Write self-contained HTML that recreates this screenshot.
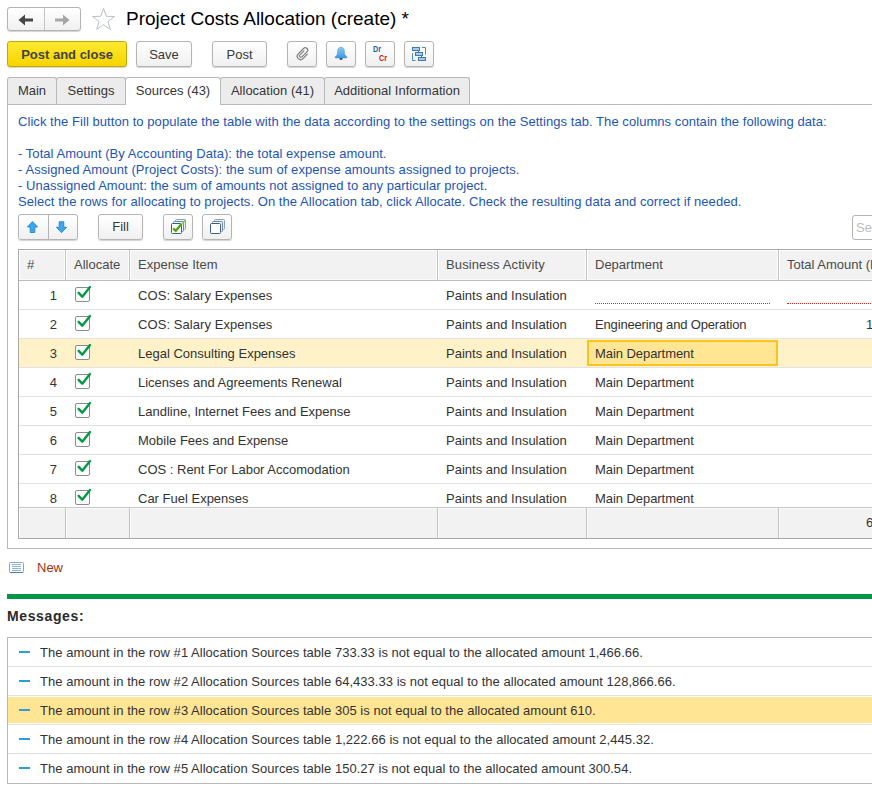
<!DOCTYPE html>
<html><head><meta charset="utf-8">
<style>
html,body{margin:0;padding:0;background:#fff;}
body{width:872px;height:792px;overflow:hidden;position:relative;font-family:"Liberation Sans",Arial,sans-serif;font-size:13px;color:#333;}
.abs{position:absolute;}
.btn{position:absolute;box-sizing:border-box;border:1px solid #b4b4b4;border-radius:3px;background:linear-gradient(#ffffff,#f0f0f0);box-shadow:0 1px 1px rgba(0,0,0,.18);height:26px;line-height:24px;text-align:center;color:#383838;font-size:13px;}
.tab{position:absolute;box-sizing:border-box;top:77px;height:27px;border:1px solid #b8b8b8;border-bottom:none;background:#ececec;border-radius:3px 3px 0 0;line-height:26px;text-align:center;font-size:13px;color:#363636;}
.tab.act{height:28px;background:#fff;z-index:2;}
.info{position:absolute;left:18px;color:#1d55b4;font-size:13px;line-height:16px;white-space:nowrap;letter-spacing:0.05px}
.cell{position:absolute;white-space:nowrap;font-size:13px;color:#333;line-height:29px;}
.hl{position:absolute;background:#e2e2e2;height:1px;}
.vl{position:absolute;background:#c4c4c4;width:1px;}
.msg{position:absolute;left:40px;white-space:nowrap;letter-spacing:0.03px;font-size:13px;line-height:29px;color:#333;}
.dash{position:absolute;left:19px;width:11px;height:2px;background:#2aa0d8;}
</style></head><body>

<!-- nav buttons -->
<div class="btn" style="left:7px;top:7px;width:74px;height:24px;"></div>
<div class="abs" style="left:44px;top:8px;width:1px;height:22px;background:#c4c4c4"></div>
<svg class="abs" style="left:18px;top:13.5px" width="16" height="12" viewBox="0 0 16 12"><path d="M0.5 6 L7 0.5 L7 4.5 L15 4.5 L15 7.5 L7 7.5 L7 11.5 Z" fill="#454545"/></svg>
<svg class="abs" style="left:54px;top:13.5px" width="16" height="12" viewBox="0 0 16 12"><path d="M15.5 6 L9 0.5 L9 4.5 L1 4.5 L1 7.5 L9 7.5 L9 11.5 Z" fill="#a6a6a6"/></svg>
<!-- star -->
<svg class="abs" style="left:91px;top:7px" width="25" height="24" viewBox="0 0 25 24"><path d="M12.5 1.5 L15.3 9.3 L23.5 9.5 L17 14.5 L19.3 22.4 L12.5 17.7 L5.7 22.4 L8 14.5 L1.5 9.5 L9.7 9.3 Z" fill="#fff" stroke="#b9c0c8" stroke-width="1"/></svg>
<div class="abs" style="left:126px;top:8px;font-size:19px;line-height:22px;color:#000;white-space:nowrap">Project Costs Allocation (create) *</div>

<!-- command bar -->
<div class="btn" style="left:7px;top:41px;width:120px;background:linear-gradient(#ffe930,#f5d400);border-color:#c2a800;font-weight:bold;color:#444;line-height:26px">Post and close</div>
<div class="btn" style="left:136px;top:41px;width:56px;line-height:26px">Save</div>
<div class="btn" style="left:212px;top:41px;width:55px;line-height:26px">Post</div>
<div class="btn" style="left:287px;top:41px;width:30px;"></div>
<div class="btn" style="left:326px;top:41px;width:30px;"></div>
<div class="btn" style="left:365px;top:41px;width:30px;"></div>
<div class="btn" style="left:404px;top:41px;width:30px;"></div>


<!-- icons -->
<svg class="abs" style="left:292.5px;top:44px" width="20" height="20" viewBox="0 0 20 20"><g transform="translate(10 9.8) rotate(45) scale(0.8) translate(-10 -10)" fill="none" stroke="#7d7d7d" stroke-width="1.5" stroke-linecap="round"><path d="M8.2 6.5 v7.2 a1.8 1.8 0 0 0 3.6 0 v-8.9 a3 3 0 0 0 -6 0 v9.4 a4.2 4.2 0 0 0 8.4 0 v-7.7"/></g></svg>
<svg class="abs" style="left:333px;top:45px" width="16" height="16" viewBox="0 0 16 16"><defs><linearGradient id="bg" x1="0" y1="0" x2="0" y2="1"><stop offset="0" stop-color="#8ecbf4"/><stop offset="1" stop-color="#3a98e2"/></linearGradient></defs><circle cx="8" cy="13.6" r="1.5" fill="#3a4a5a"/><path d="M8 2.4 C5.6 2.4 4.7 4.2 4.7 6.3 C4.7 9.2 4 10.6 2.2 11.8 L2.2 12.9 L13.8 12.9 L13.8 11.8 C12 10.6 11.3 9.2 11.3 6.3 C11.3 4.2 10.4 2.4 8 2.4 Z" fill="url(#bg)" stroke="#3f93da" stroke-width="0.6"/></svg>
<div class="abs" style="left:373px;top:43.5px;font-size:8.5px;line-height:10px;font-weight:bold;color:#2463a3;transform:scaleX(0.84);transform-origin:0 0">Dr</div>
<div class="abs" style="left:379px;top:52.5px;font-size:8.5px;line-height:10px;font-weight:bold;color:#cc1414;transform:scaleX(0.84);transform-origin:0 0">Cr</div>
<svg class="abs" style="left:411px;top:46px" width="16" height="16" viewBox="0 0 16 16"><g fill="none" stroke="#4f8cc6" stroke-width="1"><path d="M1.5 7 V14.5 H4.5"/><path d="M11 1.5 H14.5 V8.5"/><path d="M7.5 4.5 V6.5 M10.5 9.5 V11.5" stroke="#3f78b0"/></g><g fill="#a9c9ea" stroke="#3f78b0" stroke-width="1"><rect x="1.5" y="1.5" width="7" height="3"/><rect x="4.5" y="6.5" width="7" height="3"/><rect x="7.5" y="11.5" width="7" height="3"/></g></svg>

<!-- tabs -->
<div class="abs" style="left:7px;top:104px;width:865px;height:1px;background:#b8b8b8"></div>
<div class="abs" style="left:7px;top:104px;width:1px;height:445px;background:#b8b8b8"></div>
<div class="abs" style="left:7px;top:548px;width:865px;height:1px;background:#b8b8b8"></div>
<div class="tab" style="left:7px;width:50px;">Main</div>
<div class="tab" style="left:56px;width:70px;">Settings</div>
<div class="tab act" style="left:125px;width:96px;">Sources (43)</div>
<div class="tab" style="left:220px;width:105px;">Allocation (41)</div>
<div class="tab" style="left:324px;width:146px;">Additional Information</div>

<!-- info text -->
<div class="info" style="top:114px;letter-spacing:0.057px">Click the Fill button to populate the table with the data according to the settings on the Settings tab. The columns contain the following data:</div>
<div class="info" style="top:146px">- Total Amount (By Accounting Data): the total expense amount.</div>
<div class="info" style="top:162px;letter-spacing:0.078px">- Assigned Amount (Project Costs): the sum of expense amounts assigned to projects.</div>
<div class="info" style="top:178px">- Unassigned Amount: the sum of amounts not assigned to any particular project.</div>
<div class="info" style="top:194px;letter-spacing:0.062px">Select the rows for allocating to projects. On the Allocation tab, click Allocate. Check the resulting data and correct if needed.</div>

<!-- table toolbar -->
<div class="btn" style="left:18px;top:214px;width:60px;"></div>
<div class="abs" style="left:48px;top:215px;width:1px;height:24px;background:#b4b4b4"></div>
<div class="btn" style="left:98px;top:214px;width:45px;">Fill</div>
<div class="btn" style="left:163px;top:214px;width:30px;"></div>
<div class="btn" style="left:202px;top:214px;width:30px;"></div>
<div class="abs" style="left:852px;top:215px;width:40px;height:23px;border:1px solid #b4b4b4;border-radius:3px;font-size:13px;line-height:23px;color:#bcbcbc;padding-left:3px">Search</div>

<!-- toolbar icons -->
<svg class="abs" style="left:26px;top:220px" width="13" height="14" viewBox="0 0 13 14"><path d="M6.5 1.6 L11.6 7 L8.8 7 L8.8 12.5 L4.2 12.5 L4.2 7 L1.4 7 Z" fill="#3ea6ec" stroke="#2484cf" stroke-width="0.9" stroke-linejoin="round"/></svg>
<svg class="abs" style="left:55px;top:220px" width="13" height="14" viewBox="0 0 13 14"><path d="M6.5 12.7 L11.6 7.3 L8.8 7.3 L8.8 1.8 L4.2 1.8 L4.2 7.3 L1.4 7.3 Z" fill="#3ea6ec" stroke="#2484cf" stroke-width="0.9" stroke-linejoin="round"/></svg>
<svg class="abs" style="left:170px;top:218px" width="17" height="17" viewBox="0 0 17 17"><g fill="#fff" stroke-width="1"><rect x="5.5" y="1.5" width="10" height="10" rx="1" stroke="#8da2b8" fill="#e8eef4"/><rect x="3.5" y="3.5" width="10" height="10" rx="1" stroke="#6f89a4" fill="#f2f5f8"/><rect x="1.5" y="5.5" width="10" height="10" rx="1" stroke="#3e5f80"/></g><path d="M3.2 10.3 L5.8 12.8 L11.5 6" fill="none" stroke="#4aaa10" stroke-width="2.4"/><path d="M12.5 5.5 L14 3.5 M14.5 3.5 L15.5 2" stroke="#6fbf3a" stroke-width="1.6" fill="none"/></svg>
<svg class="abs" style="left:209px;top:218px" width="17" height="17" viewBox="0 0 17 17"><g fill="#fff" stroke-width="1"><rect x="5.5" y="1.5" width="10" height="10" rx="1" stroke="#8da2b8" fill="#e8eef4"/><rect x="3.5" y="3.5" width="10" height="10" rx="1" stroke="#6f89a4" fill="#f2f5f8"/><rect x="1.5" y="5.5" width="10" height="10" rx="1" stroke="#3e5f80"/></g></svg>

<!-- table -->
<div class="abs" style="left:18px;top:249px;width:860px;height:290px;border:1px solid #a8a8a8;box-sizing:border-box;"></div>
<div class="abs" style="left:19px;top:250px;width:853px;height:30px;background:#f2f2f2;"></div>
<div class="abs" style="left:19px;top:250px;width:853px;height:1px;background:#fff"></div>
<div class="abs" style="left:19px;top:279px;width:853px;height:1px;background:#fafafa"></div>
<div class="abs" style="left:19px;top:250px;width:1px;height:30px;background:#fff"></div>
<div class="abs" style="left:66px;top:250px;width:1px;height:30px;background:#fff"></div>
<div class="abs" style="left:130px;top:250px;width:1px;height:30px;background:#fff"></div>
<div class="abs" style="left:438px;top:250px;width:1px;height:30px;background:#fff"></div>
<div class="abs" style="left:587px;top:250px;width:1px;height:30px;background:#fff"></div>
<div class="abs" style="left:779px;top:250px;width:1px;height:30px;background:#fff"></div>
<div class="abs" style="left:64px;top:250px;width:1px;height:30px;background:#fbfbfb"></div>
<div class="abs" style="left:128px;top:250px;width:1px;height:30px;background:#fbfbfb"></div>
<div class="abs" style="left:436px;top:250px;width:1px;height:30px;background:#fbfbfb"></div>
<div class="abs" style="left:585px;top:250px;width:1px;height:30px;background:#fbfbfb"></div>
<div class="abs" style="left:777px;top:250px;width:1px;height:30px;background:#fbfbfb"></div>
<div class="hl" style="left:19px;top:280px;width:853px;background:#bcbcbc"></div>
<div class="abs" style="left:19px;top:339px;width:853px;height:28px;background:#fff2c8;"></div>
<div class="cell" style="left:19px;width:38px;text-align:right;top:281px;height:28px;line-height:30px">1</div>
<svg class="abs" style="left:74px;top:285px" width="18" height="19" viewBox="0 0 18 19"><rect x="1.5" y="2.5" width="14" height="14" rx="1.5" fill="#fff" stroke="#8c8c8c"/><path d="M4.6 7.8 L8.3 11.7 L16 2.1" fill="none" stroke="#009a44" stroke-width="2.4" stroke-linecap="round" stroke-linejoin="round"/></svg>
<div class="cell" style="left:138px;top:281px;line-height:30px;letter-spacing:0.07px">COS: Salary Expenses</div>
<div class="cell" style="left:446px;top:281px;line-height:30px">Paints and Insulation</div>
<div class="hl" style="left:19px;top:309px;width:853px"></div>
<div class="cell" style="left:19px;width:38px;text-align:right;top:310px;height:28px;line-height:30px">2</div>
<svg class="abs" style="left:74px;top:314px" width="18" height="19" viewBox="0 0 18 19"><rect x="1.5" y="2.5" width="14" height="14" rx="1.5" fill="#fff" stroke="#8c8c8c"/><path d="M4.6 7.8 L8.3 11.7 L16 2.1" fill="none" stroke="#009a44" stroke-width="2.4" stroke-linecap="round" stroke-linejoin="round"/></svg>
<div class="cell" style="left:138px;top:310px;line-height:30px;letter-spacing:0.07px">COS: Salary Expenses</div>
<div class="cell" style="left:446px;top:310px;line-height:30px">Paints and Insulation</div>
<div class="cell" style="left:595px;top:310px;line-height:30px;letter-spacing:-0.16px">Engineering and Operation</div>
<div class="hl" style="left:19px;top:338px;width:853px"></div>
<div class="cell" style="left:19px;width:38px;text-align:right;top:339px;height:28px;line-height:30px">3</div>
<svg class="abs" style="left:74px;top:343px" width="18" height="19" viewBox="0 0 18 19"><rect x="1.5" y="2.5" width="14" height="14" rx="1.5" fill="#fff" stroke="#8c8c8c"/><path d="M4.6 7.8 L8.3 11.7 L16 2.1" fill="none" stroke="#009a44" stroke-width="2.4" stroke-linecap="round" stroke-linejoin="round"/></svg>
<div class="cell" style="left:138px;top:339px;line-height:30px">Legal Consulting Expenses</div>
<div class="cell" style="left:446px;top:339px;line-height:30px">Paints and Insulation</div>
<div class="hl" style="left:19px;top:367px;width:853px"></div>
<div class="cell" style="left:19px;width:38px;text-align:right;top:368px;height:28px;line-height:30px">4</div>
<svg class="abs" style="left:74px;top:372px" width="18" height="19" viewBox="0 0 18 19"><rect x="1.5" y="2.5" width="14" height="14" rx="1.5" fill="#fff" stroke="#8c8c8c"/><path d="M4.6 7.8 L8.3 11.7 L16 2.1" fill="none" stroke="#009a44" stroke-width="2.4" stroke-linecap="round" stroke-linejoin="round"/></svg>
<div class="cell" style="left:138px;top:368px;line-height:30px">Licenses and Agreements Renewal</div>
<div class="cell" style="left:446px;top:368px;line-height:30px">Paints and Insulation</div>
<div class="cell" style="left:595px;top:368px;line-height:30px;letter-spacing:-0.06px">Main Department</div>
<div class="hl" style="left:19px;top:396px;width:853px"></div>
<div class="cell" style="left:19px;width:38px;text-align:right;top:397px;height:28px;line-height:30px">5</div>
<svg class="abs" style="left:74px;top:401px" width="18" height="19" viewBox="0 0 18 19"><rect x="1.5" y="2.5" width="14" height="14" rx="1.5" fill="#fff" stroke="#8c8c8c"/><path d="M4.6 7.8 L8.3 11.7 L16 2.1" fill="none" stroke="#009a44" stroke-width="2.4" stroke-linecap="round" stroke-linejoin="round"/></svg>
<div class="cell" style="left:138px;top:397px;line-height:30px">Landline, Internet Fees and Expense</div>
<div class="cell" style="left:446px;top:397px;line-height:30px">Paints and Insulation</div>
<div class="cell" style="left:595px;top:397px;line-height:30px;letter-spacing:-0.06px">Main Department</div>
<div class="hl" style="left:19px;top:425px;width:853px"></div>
<div class="cell" style="left:19px;width:38px;text-align:right;top:426px;height:28px;line-height:30px">6</div>
<svg class="abs" style="left:74px;top:430px" width="18" height="19" viewBox="0 0 18 19"><rect x="1.5" y="2.5" width="14" height="14" rx="1.5" fill="#fff" stroke="#8c8c8c"/><path d="M4.6 7.8 L8.3 11.7 L16 2.1" fill="none" stroke="#009a44" stroke-width="2.4" stroke-linecap="round" stroke-linejoin="round"/></svg>
<div class="cell" style="left:138px;top:426px;line-height:30px">Mobile Fees and Expense</div>
<div class="cell" style="left:446px;top:426px;line-height:30px">Paints and Insulation</div>
<div class="cell" style="left:595px;top:426px;line-height:30px;letter-spacing:-0.06px">Main Department</div>
<div class="hl" style="left:19px;top:454px;width:853px"></div>
<div class="cell" style="left:19px;width:38px;text-align:right;top:455px;height:28px;line-height:30px">7</div>
<svg class="abs" style="left:74px;top:459px" width="18" height="19" viewBox="0 0 18 19"><rect x="1.5" y="2.5" width="14" height="14" rx="1.5" fill="#fff" stroke="#8c8c8c"/><path d="M4.6 7.8 L8.3 11.7 L16 2.1" fill="none" stroke="#009a44" stroke-width="2.4" stroke-linecap="round" stroke-linejoin="round"/></svg>
<div class="cell" style="left:138px;top:455px;line-height:30px">COS : Rent For Labor Accomodation</div>
<div class="cell" style="left:446px;top:455px;line-height:30px">Paints and Insulation</div>
<div class="cell" style="left:595px;top:455px;line-height:30px;letter-spacing:-0.06px">Main Department</div>
<div class="hl" style="left:19px;top:483px;width:853px"></div>
<div class="cell" style="left:19px;width:38px;text-align:right;top:484px;height:28px;line-height:30px">8</div>
<svg class="abs" style="left:74px;top:488px" width="18" height="19" viewBox="0 0 18 19"><rect x="1.5" y="2.5" width="14" height="14" rx="1.5" fill="#fff" stroke="#8c8c8c"/><path d="M4.6 7.8 L8.3 11.7 L16 2.1" fill="none" stroke="#009a44" stroke-width="2.4" stroke-linecap="round" stroke-linejoin="round"/></svg>
<div class="cell" style="left:138px;top:484px;line-height:30px">Car Fuel Expenses</div>
<div class="cell" style="left:446px;top:484px;line-height:30px">Paints and Insulation</div>
<div class="cell" style="left:595px;top:484px;line-height:30px;letter-spacing:-0.06px">Main Department</div>
<div class="abs" style="left:587px;top:340px;width:191px;height:26px;box-sizing:border-box;border:2px solid #f7c51e;background:#ffe594;"></div>
<div class="cell" style="left:595px;top:339px;line-height:30px;letter-spacing:-0.06px">Main Department</div>
<div class="abs" style="left:595px;top:303px;width:175px;height:0;border-top:1px dotted #e02020"></div>
<div class="abs" style="left:787px;top:303px;width:90px;height:0;border-top:1px dotted #e02020"></div>
<div class="cell" style="left:866px;top:310px;line-height:30px">1</div>
<div class="abs" style="left:19px;top:507px;width:853px;height:31px;background:#f2f2f2;border-top:1px solid #c8c8c8;box-sizing:border-box"></div>
<div class="abs" style="left:19px;top:508px;width:853px;height:1px;background:#fafafa"></div>
<div class="abs" style="left:19px;top:508px;width:1px;height:30px;background:#fbfbfb"></div>
<div class="abs" style="left:66px;top:508px;width:1px;height:30px;background:#fbfbfb"></div>
<div class="abs" style="left:130px;top:508px;width:1px;height:30px;background:#fbfbfb"></div>
<div class="abs" style="left:438px;top:508px;width:1px;height:30px;background:#fbfbfb"></div>
<div class="abs" style="left:587px;top:508px;width:1px;height:30px;background:#fbfbfb"></div>
<div class="abs" style="left:779px;top:508px;width:1px;height:30px;background:#fbfbfb"></div>
<div class="cell" style="left:866px;top:508px;line-height:29px">6</div>
<div class="cell" style="left:27px;top:250px;line-height:30px;color:#4a4a4a">#</div>
<div class="cell" style="left:74px;top:250px;line-height:30px;color:#4a4a4a">Allocate</div>
<div class="cell" style="left:138px;top:250px;line-height:30px;color:#4a4a4a">Expense Item</div>
<div class="cell" style="left:446px;top:250px;line-height:30px;color:#4a4a4a;letter-spacing:0.12px">Business Activity</div>
<div class="cell" style="left:595px;top:250px;line-height:30px;color:#4a4a4a">Department</div>
<div class="cell" style="left:787px;top:250px;line-height:30px;color:#4a4a4a">Total Amount (By</div>
<div class="vl" style="left:65px;top:250px;height:30px"></div>
<div class="vl" style="left:65px;top:508px;height:30px"></div>
<div class="vl" style="left:129px;top:250px;height:30px"></div>
<div class="vl" style="left:129px;top:508px;height:30px"></div>
<div class="vl" style="left:437px;top:250px;height:30px"></div>
<div class="vl" style="left:437px;top:508px;height:30px"></div>
<div class="vl" style="left:586px;top:250px;height:30px"></div>
<div class="vl" style="left:586px;top:508px;height:30px"></div>
<div class="vl" style="left:778px;top:250px;height:30px"></div>
<div class="vl" style="left:778px;top:508px;height:30px"></div>
<svg class="abs" style="left:9px;top:562px" width="15" height="11" viewBox="0 0 15 11"><rect x="0.5" y="0.5" width="14" height="10" rx="1" fill="#fff" stroke="#8fa3b8"/><path d="M1 10.5h13" stroke="#5a7a98"/><path d="M3 2.5h9M3 4.5h9M3 6.5h9M3 8.5h9" stroke="#8ab4dc" stroke-width="1"/></svg>
<div class="abs" style="left:37px;top:560px;line-height:16px;font-size:13px;color:#9a3412">New</div>
<div class="abs" style="left:7px;top:594px;width:865px;height:5px;background:#009646"></div>
<div class="abs" style="left:7px;top:608px;line-height:16px;font-size:14px;font-weight:bold;color:#2a2a2a;letter-spacing:0.62px">Messages:</div>
<div class="abs" style="left:7px;top:637px;width:870px;height:147px;border:1px solid #b8b8b8;box-sizing:border-box;"></div>
<div class="dash" style="top:651px"></div>
<div class="msg" style="top:638px;line-height:30px">The amount in the row #1 Allocation Sources table 733.33 is not equal to the allocated amount 1,466.66.</div>
<div class="hl" style="left:8px;top:666px;width:864px"></div>
<div class="dash" style="top:680px"></div>
<div class="msg" style="top:667px;line-height:30px">The amount in the row #2 Allocation Sources table 64,433.33 is not equal to the allocated amount 128,866.66.</div>
<div class="hl" style="left:8px;top:695px;width:864px"></div>
<div class="abs" style="left:8px;top:697px;width:864px;height:26px;background:#ffe594"></div>
<div class="dash" style="top:709px"></div>
<div class="msg" style="top:696px;line-height:30px">The amount in the row #3 Allocation Sources table 305 is not equal to the allocated amount 610.</div>
<div class="hl" style="left:8px;top:724px;width:864px"></div>
<div class="dash" style="top:738px"></div>
<div class="msg" style="top:725px;line-height:30px">The amount in the row #4 Allocation Sources table 1,222.66 is not equal to the allocated amount 2,445.32.</div>
<div class="hl" style="left:8px;top:753px;width:864px"></div>
<div class="dash" style="top:767px"></div>
<div class="msg" style="top:754px;line-height:30px">The amount in the row #5 Allocation Sources table 150.27 is not equal to the allocated amount 300.54.</div>
</body></html>
